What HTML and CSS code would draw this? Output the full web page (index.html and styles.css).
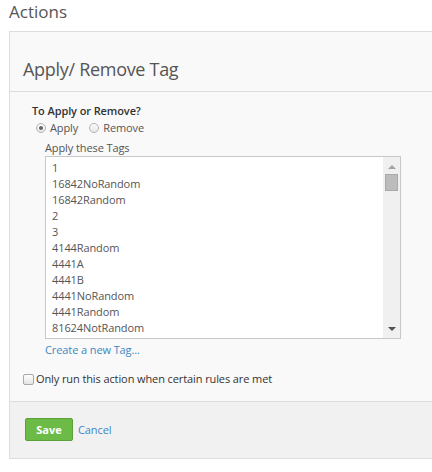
FILE: index.html
```html
<!DOCTYPE html>
<html>
<head>
<meta charset="utf-8">
<link rel="stylesheet" href="styles.css">
</head>
<body>
<div class="page">
  <h1 class="page-title">Actions</h1>
  <div class="panel">
    <div class="panel-header">
      <h2 class="panel-title">Apply/ Remove Tag</h2>
    </div>
    <div class="panel-body">
      <div class="field-label">To Apply or Remove?</div>
      <div class="radio-row">
        <label class="radio-opt"><span class="radio checked"></span>Apply</label>
        <label class="radio-opt"><span class="radio"></span>Remove</label>
      </div>
      <div class="tags-group">
        <div class="sub-label">Apply these Tags</div>
        <div class="listbox">
          <ul class="list-items">
            <li>1</li>
            <li>16842NoRandom</li>
            <li>16842Random</li>
            <li>2</li>
            <li>3</li>
            <li>4144Random</li>
            <li>4441A</li>
            <li>4441B</li>
            <li>4441NoRandom</li>
            <li>4441Random</li>
            <li>81624NotRandom</li>
          </ul>
          <div class="scrollbar">
            <span class="arrow-up"></span>
            <span class="thumb"></span>
            <span class="spacer"></span>
            <span class="arrow-down"></span>
          </div>
        </div>
        <a class="link create-link" href="#">Create a new Tag...</a>
      </div>
      <label class="check-row"><span class="checkbox"></span>Only run this action when certain rules are met</label>
    </div>
    <div class="panel-footer">
      <button class="btn-save">Save</button>
      <a class="link cancel-link" href="#">Cancel</a>
    </div>
  </div>
</div>
</body>
</html>
```

FILE: styles.css
```css
html, body {
  margin: 0;
  padding: 0;
  background: #fff;
  overflow: hidden;
}
body {
  font-family: "Open Sans", "Liberation Sans", sans-serif;
  font-size: 11px;
  letter-spacing: -0.1px;
  color: #555;
}
.page {
  padding-left: 9px;
}
.page-title {
  margin: 0 0 7px 0;
  font-size: 17px;
  line-height: 24px;
  font-weight: 400;
  letter-spacing: 0;
  color: #555;
}
.panel {
  width: 440px;
  background: #f9f9f9;
  border: 1px solid #ddd;
  border-right: none;
}
.panel-header {
  height: 60px;
  box-sizing: border-box;
  padding: 24px 0 0 13px;
  border-bottom: 1px solid #ddd;
}
.panel-title {
  margin: 0;
  font-size: 18px;
  line-height: 26px;
  font-weight: 400;
  letter-spacing: -0.3px;
  color: #555;
}
.panel-body {
  padding: 11px 0 14px 13px;
}
.field-label {
  padding-left: 9px;
  font-weight: 600;
  line-height: 16px;
  color: #333;
}
.radio-row {
  display: flex;
  gap: 11px;
  padding-left: 13px;
  line-height: 16px;
  margin-top: 1px;
}
.radio-opt {
  display: flex;
  align-items: center;
  gap: 4px;
  color: #555;
}
.radio {
  width: 8px;
  height: 8px;
  border-radius: 50%;
  border: 1px solid #b3b3b3;
  background: linear-gradient(#fdfdfd, #e6e6e6);
  box-sizing: content-box;
  display: flex;
  align-items: center;
  justify-content: center;
}
.radio.checked::after {
  content: "";
  width: 4px;
  height: 4px;
  border-radius: 50%;
  background: #666;
}
.tags-group {
  padding-left: 22px;
  margin-top: 4px;
}
.sub-label {
  line-height: 16px;
  margin-bottom: 0;
  color: #555;
}
.listbox {
  width: 356px;
  height: 183px;
  box-sizing: border-box;
  border: 1px solid #c8c8c8;
  background: #fff;
  display: flex;
}
.list-items {
  flex: 1;
  margin: 0;
  padding: 3px 0 0 6px;
  list-style: none;
  overflow: hidden;
}
.list-items li {
  line-height: 16px;
  color: #555;
}
.scrollbar {
  width: 17px;
  background: #f0f0f0;
  display: flex;
  flex-direction: column;
  align-items: center;
}
.arrow-up {
  margin-top: 8px;
  width: 0;
  height: 0;
  border-left: 4px solid transparent;
  border-right: 4px solid transparent;
  border-bottom: 4px solid #a3a3a3;
}
.thumb {
  margin-top: 5px;
  width: 11px;
  height: 15px;
  background: #bcbcbc;
  border: 1px solid #a9a9a9;
}
.spacer {
  flex: 1;
}
.arrow-down {
  margin-bottom: 7px;
  width: 0;
  height: 0;
  border-left: 4px solid transparent;
  border-right: 4px solid transparent;
  border-top: 4px solid #505050;
}
.link {
  color: #3d87c4;
  text-decoration: none;
}
.create-link {
  display: block;
  margin-top: 3px;
  line-height: 16px;
}
.check-row {
  display: flex;
  align-items: center;
  gap: 2px;
  margin-top: 13px;
  line-height: 16px;
  color: #333;
}
.checkbox {
  width: 9px;
  height: 9px;
  border: 1px solid #a8a8a8;
  border-radius: 2px;
  background: linear-gradient(#fdfdfd, #e4e4e4);
  box-sizing: content-box;
}
.panel-footer {
  background: #f2f1f1;
  border-top: 1px solid #ddd;
  padding: 16px 0 17px 15px;
  display: flex;
  align-items: center;
  gap: 5px;
}
.btn-save {
  width: 48px;
  height: 23px;
  box-sizing: border-box;
  border: 1px solid #5ba13a;
  border-radius: 2px;
  background: #6cbb47;
  color: #fff;
  font-family: "Open Sans", "Liberation Sans", sans-serif;
  font-size: 11px;
  font-weight: 700;
  padding: 0;
}
.cancel-link {
  line-height: 16px;
  font-size: 11px;
}
```
